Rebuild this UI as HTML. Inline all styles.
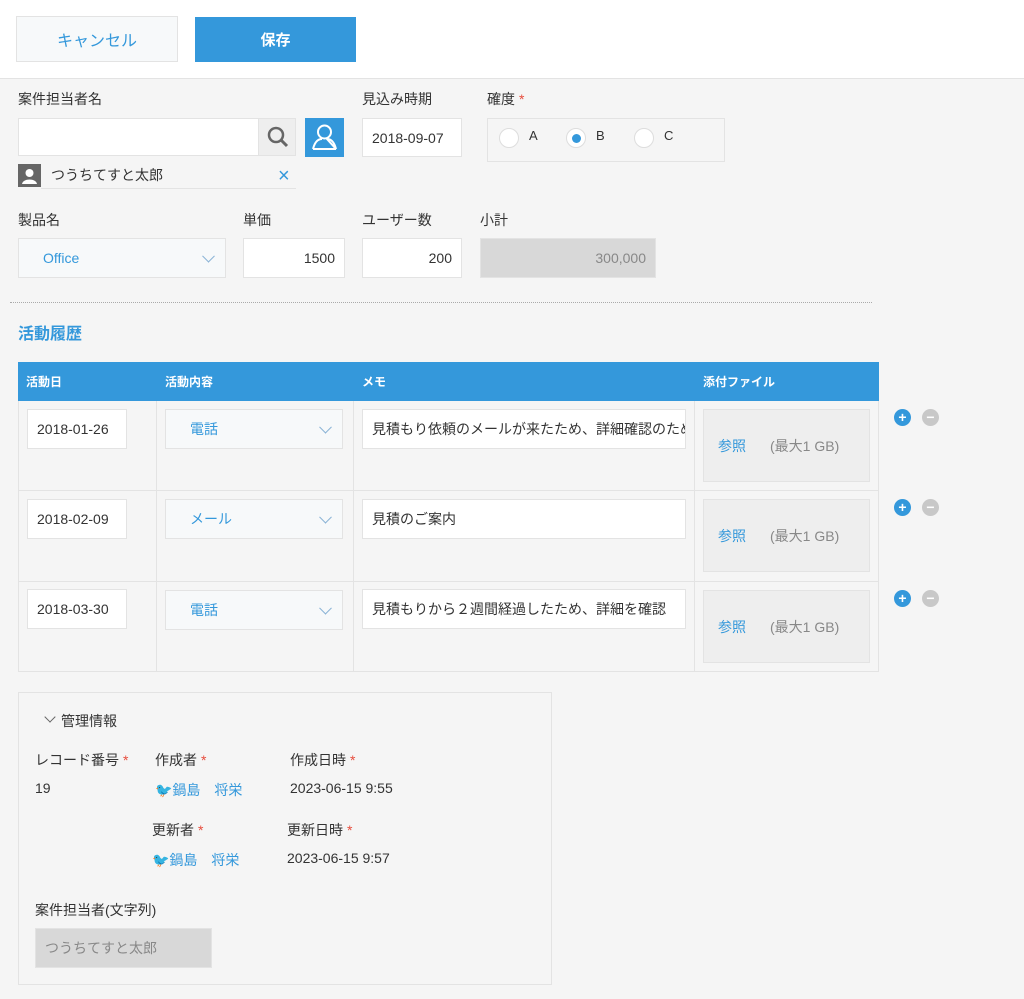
<!DOCTYPE html>
<html><head><meta charset="utf-8">
<style>
*{box-sizing:border-box;margin:0;padding:0}
body{width:1024px;height:999px;background:#f5f5f5;font-family:"Liberation Sans","Noto Sans CJK JP",sans-serif;font-size:14px;color:#333;position:relative;overflow:hidden}
.a{position:absolute}
.top{left:0;top:0;width:1024px;height:79px;background:#fff;border-bottom:1px solid #e3e3e3}
.btn{display:flex;align-items:center;justify-content:center;font-size:16px}
.inp{background:#fff;border:1px solid #e3e3e3;display:flex;align-items:center;padding:0 9px;font-size:14px;color:#333}
.lbl{font-size:14px;color:#333}
.req{color:#e74c3c;margin-left:4px}
.sel{background:#f7f9fa;border:1px solid #e3e3e3;color:#3498db;display:flex;align-items:center;padding-left:24px;font-size:14px}
.chev{position:absolute;right:12px;top:50%;width:9px;height:9px;border-right:1.5px solid #8ab3d6;border-bottom:1.5px solid #8ab3d6;transform:translateY(-70%) rotate(45deg)}
.radio{width:20px;height:20px;border-radius:50%;background:#fff;border:1px solid #ddd}
.hd{color:#fff;font-size:12px;font-weight:bold;top:373px}
.cell{border-right:1px solid #e3e3e3}
.file{background:#eee;border:1px solid #e3e3e3;width:167px;height:73px;display:flex;align-items:center;padding-left:14px;font-size:14px}
.file b{font-weight:normal;color:#3498db;margin-right:24px}
.file span{color:#888}
.pm{width:17px;height:17px;border-radius:50%;color:#fff;font-size:14px;line-height:17px;text-align:center;font-weight:bold}
.blue{color:#3498db}
</style></head><body>
<div class="a top"></div>
<div class="a btn" style="left:16px;top:16px;width:162px;height:46px;background:#f7f9fa;border:1px solid #e3e3e3;color:#3498db">キャンセル</div>
<div class="a btn" style="left:195px;top:17px;width:161px;height:45px;background:#3498db;color:#fff;font-weight:bold;font-size:15px">保存</div>

<div class="a lbl" style="left:18px;top:89px">案件担当者名</div>
<div class="a inp" style="left:18px;top:118px;width:241px;height:38px"></div>
<div class="a" style="left:258px;top:118px;width:38px;height:38px;background:#eee;border:1px solid #e3e3e3">
<svg width="38" height="38" viewBox="0 0 38 38"><circle cx="17" cy="16" r="7" fill="none" stroke="#666" stroke-width="2.5"/><line x1="22" y1="21" x2="28" y2="27" stroke="#666" stroke-width="3"/></svg></div>
<div class="a" style="left:305px;top:118px;width:39px;height:39px;background:#3498db">
<svg width="39" height="39" viewBox="0 0 39 39"><circle cx="19.5" cy="14" r="6.5" fill="none" stroke="#fff" stroke-width="2"/><path d="M8 31 C10 23 14 21 17 21 M22 21 C25 21 29 23 31 31 Z M8 31 H31" fill="none" stroke="#fff" stroke-width="2"/></svg></div>
<div class="a" style="left:18px;top:164px;width:23px;height:23px;background:#666">
<svg width="23" height="23" viewBox="0 0 23 23"><circle cx="11.5" cy="9" r="4" fill="#fff"/><path d="M4 20 C5 14 18 14 19 20Z" fill="#fff"/></svg></div>
<div class="a" style="left:51px;top:165px;font-size:14px">つうちてすと太郎</div>
<div class="a" style="left:278px;top:166px;color:#3498db;font-size:20px;line-height:20px">×</div>
<div class="a" style="left:41px;top:188px;width:255px;height:1px;background:#e3e3e3"></div>

<div class="a lbl" style="left:362px;top:89px">見込み時期</div>
<div class="a inp" style="left:362px;top:118px;width:100px;height:39px">2018-09-07</div>
<div class="a lbl" style="left:487px;top:89px">確度<span class="req">*</span></div>
<div class="a" style="left:487px;top:118px;width:238px;height:44px;border:1px solid #e3e3e3"></div>
<div class="a radio" style="left:499px;top:128px"></div><div class="a" style="left:529px;top:128px;font-size:13px">A</div>
<div class="a radio" style="left:566px;top:128px"></div><div class="a" style="left:572px;top:134px;width:9px;height:9px;border-radius:50%;background:#3498db"></div><div class="a" style="left:596px;top:128px;font-size:13px">B</div>
<div class="a radio" style="left:634px;top:128px"></div><div class="a" style="left:664px;top:128px;font-size:13px">C</div>

<div class="a lbl" style="left:18px;top:210px">製品名</div>
<div class="a sel" style="left:18px;top:238px;width:208px;height:40px">Office<i class="chev"></i></div>
<div class="a lbl" style="left:243px;top:210px">単価</div>
<div class="a inp" style="left:243px;top:238px;width:102px;height:40px;justify-content:flex-end">1500</div>
<div class="a lbl" style="left:362px;top:210px">ユーザー数</div>
<div class="a inp" style="left:362px;top:238px;width:100px;height:40px;justify-content:flex-end">200</div>
<div class="a lbl" style="left:480px;top:210px">小計</div>
<div class="a inp" style="left:480px;top:238px;width:176px;height:40px;justify-content:flex-end;background:#d8d8d8;color:#888">300,000</div>

<div class="a" style="left:10px;top:302px;width:862px;border-top:1px dotted #aaa"></div>
<div class="a" style="left:18px;top:320px;font-size:16px;font-weight:bold;color:#3498db">活動履歴</div>

<div class="a" style="left:18px;top:362px;width:861px;height:39px;background:#3498db"></div>
<div class="a hd" style="left:26px">活動日</div>
<div class="a hd" style="left:165px">活動内容</div>
<div class="a hd" style="left:362px">メモ</div>
<div class="a hd" style="left:703px">添付ファイル</div>
<div class="a" style="left:18px;top:401px;width:861px;height:271px;border:1px solid #e3e3e3;border-top:none"></div>
<div class="a cell" style="left:18px;top:401px;width:139px;height:270px"></div>
<div class="a cell" style="left:156px;top:401px;width:198px;height:270px"></div>
<div class="a cell" style="left:353px;top:401px;width:342px;height:270px"></div>
<div class="a" style="left:18px;top:490px;width:861px;height:1px;background:#e3e3e3"></div>
<div class="a" style="left:18px;top:581px;width:861px;height:1px;background:#e3e3e3"></div>

<div class="a inp" style="left:27px;top:409px;width:100px;height:40px">2018-01-26</div>
<div class="a sel" style="left:165px;top:409px;width:178px;height:40px">電話<i class="chev"></i></div>
<div class="a inp" style="left:362px;top:409px;width:324px;height:40px;white-space:nowrap;overflow:hidden">見積もり依頼のメールが来たため、詳細確認のため</div>
<div class="a file" style="left:703px;top:409px"><b>参照</b><span>(最大1 GB)</span></div>
<div class="a pm" style="left:894px;top:409px;background:#3498db">+</div>
<div class="a pm" style="left:922px;top:409px;background:#c8c8c8">−</div>

<div class="a inp" style="left:27px;top:499px;width:100px;height:40px">2018-02-09</div>
<div class="a sel" style="left:165px;top:499px;width:178px;height:40px">メール<i class="chev"></i></div>
<div class="a inp" style="left:362px;top:499px;width:324px;height:40px">見積のご案内</div>
<div class="a file" style="left:703px;top:499px"><b>参照</b><span>(最大1 GB)</span></div>
<div class="a pm" style="left:894px;top:499px;background:#3498db">+</div>
<div class="a pm" style="left:922px;top:499px;background:#c8c8c8">−</div>

<div class="a inp" style="left:27px;top:589px;width:100px;height:40px">2018-03-30</div>
<div class="a sel" style="left:165px;top:590px;width:178px;height:40px">電話<i class="chev"></i></div>
<div class="a inp" style="left:362px;top:589px;width:324px;height:40px">見積もりから２週間経過したため、詳細を確認</div>
<div class="a file" style="left:703px;top:590px"><b>参照</b><span>(最大1 GB)</span></div>
<div class="a pm" style="left:894px;top:590px;background:#3498db">+</div>
<div class="a pm" style="left:922px;top:590px;background:#c8c8c8">−</div>

<div class="a" style="left:18px;top:692px;width:534px;height:293px;border:1px solid #e3e3e3"></div>
<div class="a" style="left:46px;top:713px;width:8px;height:8px;border-right:1.5px solid #666;border-bottom:1.5px solid #666;transform:rotate(45deg)"></div>
<div class="a" style="left:61px;top:711px;font-size:14px">管理情報</div>
<div class="a lbl" style="left:35px;top:750px">レコード番号<span class="req">*</span></div>
<div class="a" style="left:35px;top:780px">19</div>
<div class="a lbl" style="left:155px;top:750px">作成者<span class="req">*</span></div>
<div class="a blue" style="left:155px;top:780px"><span style="color:#a0744a">🐦</span>鍋島　将栄</div>
<div class="a lbl" style="left:290px;top:750px">作成日時<span class="req">*</span></div>
<div class="a" style="left:290px;top:780px">2023-06-15 9:55</div>
<div class="a lbl" style="left:152px;top:820px">更新者<span class="req">*</span></div>
<div class="a blue" style="left:152px;top:850px"><span style="color:#a0744a">🐦</span>鍋島　将栄</div>
<div class="a lbl" style="left:287px;top:820px">更新日時<span class="req">*</span></div>
<div class="a" style="left:287px;top:850px">2023-06-15 9:57</div>
<div class="a lbl" style="left:35px;top:900px">案件担当者(文字列)</div>
<div class="a inp" style="left:35px;top:928px;width:177px;height:40px;background:#d8d8d8;color:#888">つうちてすと太郎</div>
</body></html>
